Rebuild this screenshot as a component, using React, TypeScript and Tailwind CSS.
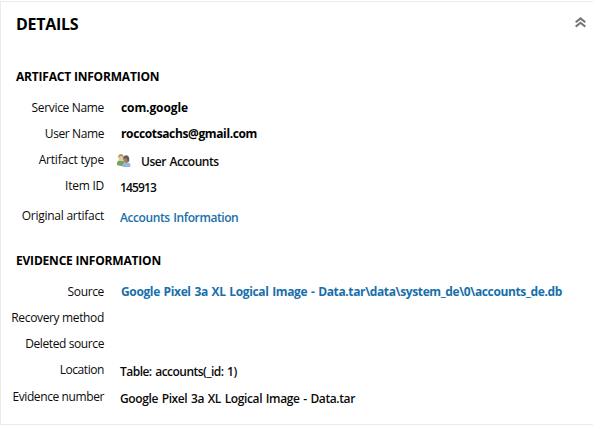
import type { ReactNode } from "react";

type RowProps = {
  label: string;
  labelClass: string;
  height: string;
  children?: ReactNode;
};

function Row({ label, labelClass, height, children }: RowProps) {
  return (
    <div className={`flex items-start ${height}`}>
      <div className={`w-[103px] shrink-0 whitespace-nowrap text-right ${labelClass}`}>{label}</div>
      {children}
    </div>
  );
}

function UsersIcon() {
  return (
    <svg className="mt-0.5 ml-[13px] h-[14px] w-[14px] shrink-0" viewBox="0 0 14 14">
      <path d="M0 11V8.4Q0.6 6.3 3.6 6.2Q6.8 6.2 7.2 8.4V11.6Q4 12.4 0 11Z" fill="#75a45c" />
      <ellipse cx="4" cy="3.6" rx="2.6" ry="3.4" fill="#dccb9c" />
      <path d="M1.3 3.8Q0.8 0.2 4 0.2Q6.8 0.2 6.5 3.2Q4.4 1.4 2.5 2.4Z" fill="#a9925e" />
      <path d="M5.4 13V10.4Q6.4 8.4 9.4 8.2Q13 8.3 13.4 10.6V13Z" fill="#93b8e2" />
      <ellipse cx="9" cy="5.3" rx="2.7" ry="3.7" fill="#b07c5e" />
      <path d="M6.2 5.2Q6 1.5 9.2 1.5Q12.8 1.5 12.2 7.4L10.6 7.8Q10.5 3.6 8 4.2Z" fill="#635a55" />
    </svg>
  );
}

export default function App() {
  return (
    <div className="h-[430px] w-full overflow-hidden bg-white pt-px font-['Open_Sans','Noto_Sans',sans-serif] text-[12px] leading-4 text-[#0a0a0a]">
      <main className="h-[424px] border-y border-l border-[#ebebeb]">
        <header className="flex h-[67px] items-start justify-between pl-[15px] pr-[7px]">
          <h1 className="mt-3 text-base font-bold leading-5 tracking-[-0.3px] text-black">DETAILS</h1>
          <svg className="mt-[15px] h-[11px] w-[11px]" viewBox="0 0 11 11" fill="none" stroke="#737478" strokeWidth="2">
            <path d="M0.7 5.2L5.5 1.4L10.3 5.2M0.7 9.6L5.5 5.8L10.3 9.6" />
          </svg>
        </header>
        <section className="h-[184px]">
          <h2 className="h-[31px] whitespace-nowrap pl-[15px] font-bold tracking-[-0.2px] text-black">ARTIFACT INFORMATION</h2>
          <Row label="Service Name" labelClass="tracking-[-0.33px]" height="h-[26px]">
            <span className="ml-[17px] font-bold tracking-[-0.1px] text-black">com.google</span>
          </Row>
          <Row label="User Name" labelClass="tracking-[-0.4px]" height="h-[26px]">
            <span className="ml-[17px] font-bold tracking-[-0.37px] text-black">roccotsachs@gmail.com</span>
          </Row>
          <Row label="Artifact type" labelClass="tracking-[-0.21px]" height="h-[26px]">
            <UsersIcon />
            <span className="ml-[10px] mt-0.5 font-semibold tracking-[-0.5px] [word-spacing:1px]">User Accounts</span>
          </Row>
          <Row label="Item ID" labelClass="tracking-[-0.25px]" height="h-[30px]">
            <span className="ml-4 mt-0.5 font-semibold tracking-[-0.85px]">145913</span>
          </Row>
          <Row label="Original artifact" labelClass="tracking-[-0.25px]" height="h-[26px]">
            <a className="ml-4 mt-0.5 font-semibold tracking-[-0.42px] text-[#176fab] [word-spacing:1px]">Accounts Information</a>
          </Row>
        </section>
        <section>
          <h2 className="h-[31px] whitespace-nowrap pl-[15px] font-bold tracking-[-0.2px] text-black">EVIDENCE INFORMATION</h2>
          <Row label="Source" labelClass="tracking-[-0.35px]" height="h-[26px]">
            <a className="ml-[17px] whitespace-nowrap font-bold tracking-[-0.37px] text-[#176fab] [word-spacing:1px]">Google Pixel 3a XL Logical Image - Data.tar\data\system_de\0\accounts_de.db</a>
          </Row>
          <Row label="Recovery method" labelClass="tracking-[-0.35px]" height="h-[26px]" />
          <Row label="Deleted source" labelClass="tracking-[-0.4px]" height="h-[26px]" />
          <Row label="Location" labelClass="tracking-[-0.43px]" height="h-[27px]">
            <span className="ml-4 mt-0.5 font-semibold tracking-[-0.52px] [word-spacing:1px]">Table: accounts(_id: 1)</span>
          </Row>
          <Row label="Evidence number" labelClass="tracking-[-0.4px]" height="h-[26px]">
            <span className="ml-4 mt-0.5 font-semibold tracking-[-0.39px] [word-spacing:1px]">Google Pixel 3a XL Logical Image - Data.tar</span>
          </Row>
        </section>
      </main>
    </div>
  );
}
